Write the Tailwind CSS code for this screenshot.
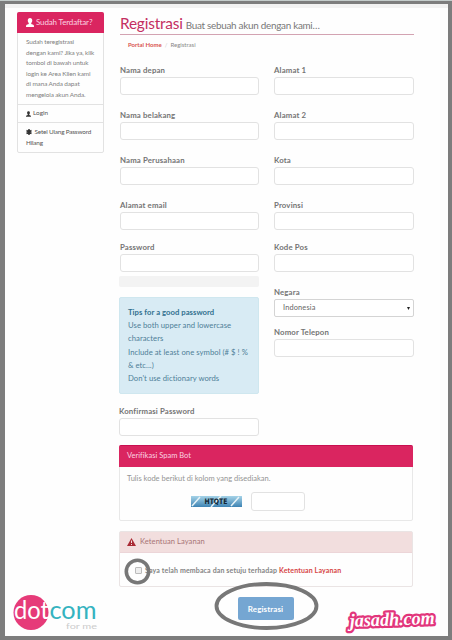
<!DOCTYPE html>
<html lang="id">
<head>
    <meta charset="UTF-8">
    <meta name="viewport" content="width=device-width, initial-scale=1.0">
    <title>Registrasi</title>
    <script src="https://cdn.jsdelivr.net/npm/@tailwindcss/browser@4"></script>
</head>
<body class="bg-[#7d7d7d] font-[Lato,sans-serif] text-[#747474]">
    <div class="relative w-[452px] h-[640px] overflow-hidden border-t border-[#c4cccb] pt-[3px] pl-[5px] pr-1 pb-1">
        <div class="h-full bg-[#fefefe] border-t-4 border-[#f2f2f2] flex items-start">

            <!-- Sidebar -->
            <aside class="w-[87px] h-[141px] ml-3 mt-1 border border-[#e2e2e2] rounded-[2px] text-[6.4px] leading-[10.6px] shrink-0">
                <div class="-mx-px -mt-px h-[21px] bg-[#da2560] rounded-t-[2px] flex items-center pl-[9px] text-[8px] tracking-[-0.15px] text-[#fbd3e1] whitespace-nowrap">
                    <svg class="w-[8px] h-[9px] mr-[2px]" viewBox="0 0 16 18" fill="#fff"><path d="M8 0c3 0 4.500 2 4.500 5 0 2-1 4-2 5v2l4 1.500c1 .5 1.500 1.500 1.500 4.500H0c0-3 .5-4 1.500-4.500l4-1.500v-2c-1-1-2-3-2-5C3.500 2 5 0 8 0z"/></svg>
                    Sudah Terdaftar?
                </div>
                <p class="h-[71px] pl-2 pt-1 whitespace-nowrap tracking-[-0.1px] text-[#808080]">Sudah teregistrasi<br>dengan kami? Jika ya, klik<br>tombol di bawah untuk<br>login ke Area Klien kami<br>di mana Anda dapat<br>mengelola akun Anda.</p>
                <a class="h-[18px] border-t border-[#e2e2e2] pl-2 flex items-center text-[#555]">
                    <svg class="w-[5px] h-[6px] mr-[2px]" viewBox="0 0 16 18" fill="#333"><path d="M8 0c3 0 4.500 2 4.500 5 0 2-1 4-2 5v2l4 1.500c1 .5 1.500 1.500 1.500 4.500H0c0-3 .5-4 1.500-4.500l4-1.500v-2c-1-1-2-3-2-5C3.500 2 5 0 8 0z"/></svg>
                    Login
                </a>
                <a class="block border-t border-[#e2e2e2] pl-2 pt-1 text-[#555] tracking-[-0.18px] whitespace-nowrap">
                    <svg class="inline w-[6px] h-[6px] mr-[1px] align-[-0.5px]" viewBox="0 0 12 12" stroke="#333" stroke-width="3"><path d="M6 0v12M1 3l10 6M11 3L1 9"/></svg>
                    Setel Ulang Password<br>Hilang
                </a>
            </aside>

            <main class="w-[294px] ml-[16px] shrink-0">
                <h1 class="h-[27px] border-b border-[#d3a3b2] flex items-baseline whitespace-nowrap">
                    <span class="text-[15.4px] leading-[30px] text-[#c42f62] tracking-[-0.2px]">Registrasi</span>
                    <span class="ml-[3px] text-[9.9px] tracking-[-0.27px] text-[#777]">Buat sebuah akun dengan kami…</span>
                </h1>
                <nav class="h-[20px] pl-[8px] text-[6px] leading-[19px]"><b class="text-[#d9534f]">Portal Home</b><span class="mx-[3px] text-[#ccc]">/</span><span class="text-[#888]">Registrasi</span></nav>

                <!-- Form columns -->
                <div class="h-[390px] pt-[8px] flex justify-between text-[7.8px] tracking-[0.15px] font-bold">
                    <div class="w-[139px]">
                        <label class="block h-[45px] leading-[14px]">Nama depan<input class="block w-full h-[18px] border border-[#e2e2e2] rounded-[3px] bg-white"></label>
                        <label class="block h-[45px] leading-[14px]">Nama belakang<input class="block w-full h-[18px] border border-[#e2e2e2] rounded-[3px] bg-white"></label>
                        <label class="block h-[45px] leading-[14px]">Nama Perusahaan<input class="block w-full h-[18px] border border-[#e2e2e2] rounded-[3px] bg-white"></label>
                        <label class="block h-[42px] leading-[14px]">Alamat email<input class="block w-full h-[18px] border border-[#e2e2e2] rounded-[3px] bg-white"></label>
                        <label class="block h-[36px] leading-[14px]">Password<input class="block w-full h-[18px] border border-[#e2e2e2] rounded-[3px] bg-white"></label>
                        <div class="-ml-px h-[11px] bg-[#f3f3f3] rounded-[2px]"></div>
                        <div class="-ml-px mt-[10px] h-[97px] bg-[#d8ebf4] border border-[#cfe7ef] rounded-[2px] pl-[8px] pt-[8px] text-[7.7px] leading-[13.2px] tracking-[0.04px] font-normal text-[#4f7f98] whitespace-nowrap">
                            <b class="text-[#31708f]">Tips for a good password</b><br>Use both upper and lowercase<br>characters<br>Include at least one symbol (# $ ! %<br>&amp; etc...)<br>Don't use dictionary words
                        </div>
                        <label class="block -ml-px mt-[10px] leading-[14px]">Konfirmasi Password<input class="block w-full h-[18px] border border-[#e2e2e2] rounded-[3px] bg-white"></label>
                    </div>
                    <div class="w-[140px]">
                        <label class="block h-[45px] leading-[14px]">Alamat 1<input class="block w-full h-[18px] border border-[#e2e2e2] rounded-[3px] bg-white"></label>
                        <label class="block h-[45px] leading-[14px]">Alamat 2<input class="block w-full h-[18px] border border-[#e2e2e2] rounded-[3px] bg-white"></label>
                        <label class="block h-[45px] leading-[14px]">Kota<input class="block w-full h-[18px] border border-[#e2e2e2] rounded-[3px] bg-white"></label>
                        <label class="block h-[42px] leading-[14px]">Provinsi<input class="block w-full h-[18px] border border-[#e2e2e2] rounded-[3px] bg-white"></label>
                        <label class="block h-[45px] leading-[14px]">Kode Pos<input class="block w-full h-[18px] border border-[#e2e2e2] rounded-[3px] bg-white"></label>
                        <div class="h-[40px] leading-[14px]">Negara
                            <div class="h-[18px] border border-[#d4d4d4] rounded-[2px] bg-white flex items-center justify-between pl-2 pr-[3px] text-[7.4px] font-normal text-[#666]">Indonesia
                                <svg class="w-[3px] h-[3px]" viewBox="0 0 4 4" fill="#222"><path d="M0 0h4L2 4z"/></svg>
                            </div>
                        </div>
                        <label class="block leading-[14px]">Nomor Telepon<input class="block w-full h-[18px] border border-[#e2e2e2] rounded-[3px] bg-white"></label>
                    </div>
                </div>

                <!-- Captcha -->
                <section class="w-[294px] h-[76px] -ml-px border border-[#e8e8e8] rounded-[2px] text-[7.5px]">
                    <div class="-mx-px -mt-px h-[22px] bg-[#da2560] border-t border-[#c80f50] pl-[8px] leading-[20px] tracking-[0.02px] text-[#fbd3e1] rounded-t-[2px]">Verifikasi Spam Bot</div>
                    <p class="pl-[7px] pt-[5px] leading-[13px] text-[#949494]">Tulis kode berikut di kolom yang disediakan.</p>
                    <div class="flex items-center pl-[71px] mt-[7px]">
                        <svg class="w-[51px] h-[11px]" viewBox="0 0 51 11">
                            <defs><linearGradient id="sky" x2="0" y2="1"><stop stop-color="#a5d3e8"/><stop offset="1" stop-color="#3e83b3"/></linearGradient></defs>
                            <rect width="51" height="11" fill="url(#sky)"/>
                            <path d="M1 10L9 1M20 11L30 0M40 10l8-9" stroke="#e6f3f8" stroke-width="1.500"/>
                            <text x="13.500" y="8.300" font-family="DejaVu Sans" font-size="7.500" font-weight="bold" fill="#122431" textLength="23" lengthAdjust="spacingAndGlyphs">HTQTE</text>
                        </svg>
                        <input class="ml-[9px] w-[54px] h-[19px] border border-[#e2e2e2] rounded-[3px] bg-white">
                    </div>
                </section>

                <!-- Terms -->
                <section class="w-[294px] h-[56px] -ml-px mt-[10px] border border-[#eae4e4] rounded-[2px] text-[7.6px]">
                    <div class="h-[21px] bg-[#f2dede] border-b border-[#ecd5d8] pl-[7px] flex items-center tracking-[0.05px] text-[#a87577]">
                        <svg class="w-[9px] h-[8px] mr-[4px]" viewBox="0 0 18 16"><path d="M9 0l9 16H0z" fill="#a92b35"/><path d="M9 5v5M9 12v2" stroke="#f2dede" stroke-width="2"/></svg>
                        Ketentuan Layanan
                    </div>
                    <div class="flex items-center h-[34px] pl-[15px] text-[7px] tracking-[0.14px] font-bold whitespace-nowrap text-[#858585]">
                        <span class="size-[7px] mr-[3px] border border-[#bbb] rounded-[1px] bg-[#eee]"></span>
                        Saya telah membaca dan setuju terhadap&nbsp;<span class="text-[#d64545]">Ketentuan Layanan</span>
                    </div>
                </section>
                <div class="flex justify-center mt-[10px] pr-[3px]">
                    <button class="w-[56px] h-[23px] rounded-[2px] bg-[#75a6d2] text-[8px] tracking-[0.1px] font-bold text-white">Registrasi</button>
                </div>
            </main>
        </div>

        <!-- Highlight rings and logos over the page -->
        <svg class="absolute left-0 -top-px w-[452px] h-[640px]" viewBox="0 0 452 640" fill="none">
            <circle cx="137.500" cy="571.500" r="11.200" stroke="#777" stroke-width="3.600"/>
            <ellipse cx="266.500" cy="606" rx="50" ry="22" stroke="#777" stroke-width="3.800"/>
            <circle cx="31" cy="612.500" r="17.500" fill="#e63b79"/>
            <g font-family="Lato" font-size="25">
                <text x="14" y="619" fill="#fff" textLength="35" lengthAdjust="spacingAndGlyphs">dot</text>
                <text x="49.500" y="619" fill="#35b3c0" textLength="47" lengthAdjust="spacingAndGlyphs">com</text>
                <text x="66" y="628.500" font-size="8" fill="#ccc" textLength="31" lengthAdjust="spacingAndGlyphs">for me</text>
            </g>
            <text x="350" y="627" transform="rotate(-2 350 627)" font-family="Liberation Serif" font-style="italic" font-weight="bold" font-size="19" fill="#fff" stroke="#e2357b" stroke-width="4.500" stroke-linejoin="round" paint-order="stroke" textLength="85" lengthAdjust="spacingAndGlyphs">jasadh.com</text>
        </svg>
    </div>
</body>
</html>
